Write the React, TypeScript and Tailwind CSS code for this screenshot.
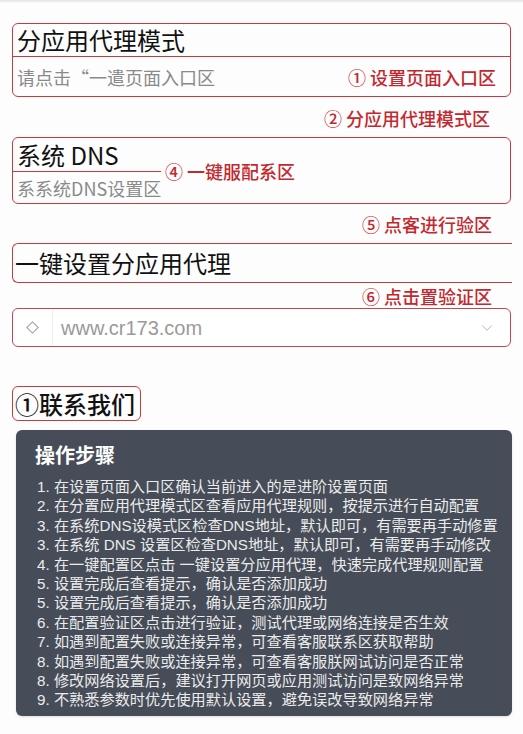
import { ChevronDown } from "lucide-react";

const steps = [
  "1. 在设置页面入口区确认当前进入的是进阶设置页面",
  "2. 在分置应用代理模式区查看应用代理规则，按提示进行自动配置",
  "3. 在系统DNS设模式区检查DNS地址，默认即可，有需要再手动修置",
  "3. 在系统 DNS 设置区检查DNS地址，默认即可，有需要再手动修改",
  "4. 在一键配置区点击 一键设置分应用代理，快速完成代理规则配置",
  "5. 设置完成后查看提示，确认是否添加成功",
  "5. 设置完成后查看提示，确认是否添加成功",
  "6. 在配置验证区点击进行验证，测试代理或网络连接是否生效",
  "7. 如遇到配置失败或连接异常，可查看客服联系区获取帮助",
  "8. 如遇到配置失败或连接异常，可查看客服朕网试访问是否正常",
  "8. 修改网络设置后，建议打开网页或应用测试访问是致网络异常",
  "9. 不熟悉参数时优先使用默认设置，避免误改导致网络异常",
];

const font = "font-['Noto_Sans_CJK_SC','Noto_Sans',sans-serif]";
const red = "text-[#c4282f]";

export default function App() {
  return (
    <div className={`min-h-[734px] w-full bg-[#fdfdfd] pb-4 ${font}`}>
      <div className="h-[3px] bg-gradient-to-b from-[#e4e4e4] to-[#fafafa]" />

      {/* 分应用代理模式 */}
      <div className="mx-3 mt-[20px] rounded-md border border-[#c93a40]">
        <div className="flex h-[33px] items-center border-b border-[#c93a40] pl-[4px] text-[24px] leading-none text-[#111]">
          分应用代理模式
        </div>
        <div className="flex h-[39px] items-center justify-between pl-[4px] pr-[14px]">
          <span className="text-[18px] leading-none text-[#8a8a8a]">请点击“一遣页面入口区</span>
          <span className={`text-[18px] font-medium leading-none ${red}`}>① 设置页面入口区</span>
        </div>
      </div>

      <div className={`mt-[9px] flex justify-end pr-[33px] text-[18px] font-medium leading-[24px] ${red}`}>
        ② 分应用代理模式区
      </div>

      {/* 系统 DNS */}
      <div className="mx-3 mt-[7px] rounded-md border border-[#c93a40]">
        <div className="flex h-[33px] items-center pl-[4px] text-[24px] leading-none text-[#111]">
          系统 DNS
        </div>
        <div className="flex items-start">
          <div className="flex h-[32px] w-[148px] items-center whitespace-nowrap border-t border-[#c93a40] pl-[4px] text-[18px] leading-none text-[#8a8a8a]">
            系系统DNS设置区
          </div>
          <span className={`-mt-[12px] ml-[4px] text-[18px] font-medium leading-[24px] ${red}`}>④ 一键服配系区</span>
        </div>
      </div>

      <div className={`mt-[8px] flex justify-end pr-[31px] text-[18px] font-medium leading-[24px] ${red}`}>
        ⑤ 点客进行验区
      </div>

      {/* 一键设置分应用代理 */}
      <div className="ml-3 mr-[11px] mt-[7px] flex h-[40px] items-center rounded-l-md border border-r-0 border-[#c93a40] pl-[2px] text-[24px] leading-none text-[#111]">
        一键设置分应用代理
      </div>

      <div className={`mt-[1px] flex justify-end pr-[31px] text-[18px] font-medium leading-[24px] ${red}`}>
        ⑥ 点击置验证区
      </div>

      <div className="mx-3 flex h-[39px] items-center rounded-md border border-[#c0484d] bg-white">
        <div className="flex h-full w-[40px] items-center justify-center border-r border-[#eeeeee]">
          <span className="block h-[9px] w-[9px] rotate-45 border border-[#9a9a9a]" />
        </div>
        <span className="ml-[8px] flex-1 font-['Liberation_Sans',sans-serif] text-[20px] leading-none text-[#9a9a9a]">
          www.cr173.com
        </span>
        <ChevronDown className="mr-[14px] h-[18px] w-[18px] text-[#b0b0b0]" strokeWidth={1.25} />
      </div>

      {/* 联系我们 */}
      <div className="ml-3 mt-[39px] flex h-[35px] w-[129px] items-center rounded-md border border-[#c93a40] pl-[2px] text-[24px] font-medium leading-none text-[#111]">
        ①联系我们
      </div>

      <div className="ml-4 mr-[11px] mt-[9px] rounded-md bg-[#464d58] pb-[6px] pl-[19px] pt-[13px] shadow-sm">
        <div className="text-[20px] font-bold leading-[24px] text-white">操作步骤</div>
        <ul className="mt-[10px] pl-[2px] font-['Liberation_Sans','Noto_Sans_CJK_SC',sans-serif]">
          {steps.map((s, i) => (
            <li key={i} className="h-[19.4px] whitespace-nowrap text-[15.2px] leading-[19.4px] text-[#ebebeb]">
              {s}
            </li>
          ))}
        </ul>
      </div>
    </div>
  );
}
